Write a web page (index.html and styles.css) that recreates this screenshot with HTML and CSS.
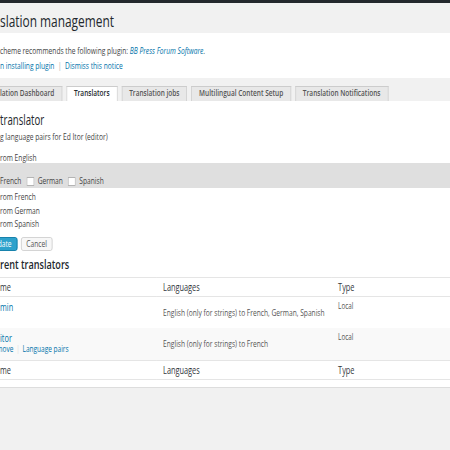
FILE: index.html
```html
<!DOCTYPE html>
<html lang="en">
<head>
    <meta charset="UTF-8">
    <meta name="viewport" content="width=device-width, initial-scale=1.0">
    <title>Translation management</title>
    <link rel="stylesheet" href="styles.css">
</head>
<body>
    <div class="adminbar"></div>

    <div class="page">
        <div class="page-head">
            <h1>slation management</h1>
        </div>

        <!-- Notice -->
        <div class="notice">
            <p>cheme recommends the following plugin: <em><a href="#">BB Press Forum Software</a></em>.</p>
            <p><a href="#">n installing plugin</a><span class="sep">|</span><a href="#">Dismiss this notice</a></p>
        </div>

        <!-- Tabs -->
        <div class="tabs">
            <a href="#" class="tab first">lation Dashboard</a>
            <a href="#" class="tab active">Translators</a>
            <a href="#" class="tab">Translation jobs</a>
            <a href="#" class="tab">Multilingual Content Setup</a>
            <a href="#" class="tab">Translation Notifications</a>
        </div>

        <div class="panel">
            <h2 class="edit-title">translator</h2>
            <p class="lead">g language pairs for Ed Itor (editor)</p>

            <p class="from-en">rom English</p>
            <div class="band">
                <label>French</label>
                <label><span class="cb"></span>German</label>
                <label><span class="cb"></span>Spanish</label>
            </div>

            <div class="pairs">
                <p>rom French</p>
                <p>rom German</p>
                <p>rom Spanish</p>
            </div>

            <div class="actions">
                <button class="primary">Update</button>
                <button>Cancel</button>
            </div>

            <h2 class="list-title">rent translators</h2>

            <table class="translators">
                <colgroup>
                    <col class="col-name">
                    <col class="col-langs">
                    <col>
                </colgroup>
                <thead>
                    <tr><th>me</th><th>Languages</th><th>Type</th></tr>
                </thead>
                <tbody>
                    <tr>
                        <td><a href="#" class="name">min</a></td>
                        <td class="langs">English (only for strings) to French, German, Spanish</td>
                        <td class="type">Local</td>
                    </tr>
                    <tr class="alt">
                        <td>
                            <a href="#" class="name">itor</a>
                            <div class="row-actions"><a href="#">move</a><span class="sep">|</span><a href="#">Language pairs</a></div>
                        </td>
                        <td class="langs">English (only for strings) to French</td>
                        <td class="type">Local</td>
                    </tr>
                </tbody>
                <tfoot>
                    <tr><th>me</th><th>Languages</th><th>Type</th></tr>
                </tfoot>
            </table>
        </div>
    </div>
</body>
</html>
```

FILE: styles.css
```css
html, body {
    margin: 0;
    padding: 0;
    overflow: hidden;
}

body {
    font-family: "Open Sans", sans-serif;
    font-size: 9.5px;
    color: #444;
    background-color: #f1f1f1;
}

a {
    color: #0073aa;
    text-decoration: none;
}

.adminbar {
    height: 3px;
    background-color: #23282d;
}

/* the whole screen is squeezed sideways */
.page {
    width: 643px;
    transform: scaleX(0.7);
    transform-origin: 0 0;
}

/* Header */
.page-head {
    height: 30px;
    box-sizing: border-box;
    padding-top: 8px;
}

.page-head h1 {
    margin: 0;
    font-size: 17px;
    font-weight: 400;
    line-height: 20px;
    color: #23282d;
}

/* Notice */
.notice {
    height: 45px;
    box-sizing: border-box;
    padding-top: 9.5px;
    background-color: #fff;
}

.notice p {
    margin: 0;
    line-height: 15px;
}

.sep {
    color: #aaa;
    margin: 0 5px;
}

/* Tabs */
.tabs {
    display: flex;
    align-items: flex-end;
    gap: 6px;
    height: 23px;
    box-sizing: border-box;
    padding-top: 8px;
}

.tab {
    height: 15px;
    box-sizing: border-box;
    padding: 0 10px;
    border: 1px solid #ccc;
    border-bottom: none;
    background-color: #e8e8e8;
    color: #555;
    font-size: 9.3px;
    font-weight: 600;
    line-height: 12px;
    white-space: nowrap;
}

.tab.first {
    padding-left: 0;
    border-left: none;
}

.tab.active {
    background-color: #fff;
    color: #23282d;
}

/* Panel */
.panel {
    background-color: #fff;
    padding: 11px 0 7px;
    border-bottom: 1px solid #ddd;
}

.panel h2 {
    margin: 0;
    font-size: 13px;
    font-weight: 600;
    line-height: 16px;
    color: #23282d;
}

.panel h2.edit-title {
    font-size: 13.8px;
    font-weight: 400;
}

.lead {
    margin: 2px 0 0;
    line-height: 14px;
}

.from-en {
    margin: 9px 0 0;
    line-height: 10px;
}

.band {
    background-color: #dfdfdf;
    padding: 11px 0 0;
    line-height: 14px;
}

.cb {
    display: inline-block;
    width: 11px;
    height: 9px;
    box-sizing: border-box;
    border: 1px solid #b4b4b4;
    background-color: #fff;
    vertical-align: middle;
    margin: 0 5px;
}

.pairs {
    margin-top: 2px;
}

.pairs p {
    margin: 0;
    line-height: 13.5px;
}

.actions {
    display: flex;
    gap: 5px;
    margin-top: 6px;
}

button {
    font-family: inherit;
    font-size: 9.5px;
    height: 14px;
    line-height: 12px;
    padding: 0 7px;
    border: 1px solid #ccc;
    border-radius: 3px;
    background-color: #f7f7f7;
    color: #555;
}

button.primary {
    margin-left: -24px;
    background-color: #2ea2cc;
    border-color: #0074a2;
    color: #fff;
}

.panel h2.list-title {
    margin-top: 5px;
}

/* Translators table */
.translators {
    margin-top: 5px;
    margin-left: -10px;
    width: 653px;
    table-layout: fixed;
    border-collapse: collapse;
    border-top: 1px solid #e5e5e5;
    border-bottom: 1px solid #e5e5e5;
}

.col-name {
    width: 233px;
}

.col-langs {
    width: 250px;
}

.translators th {
    padding: 0 10px;
    height: 18px;
    line-height: 18px;
    text-align: left;
    font-size: 10.5px;
    font-weight: 400;
    color: #32373c;
}

.translators thead th {
    border-bottom: 1px solid #e5e5e5;
}

.translators tfoot th {
    border-top: 1px solid #e5e5e5;
}

.translators tbody tr {
    height: 32px;
}

.translators tbody tr.alt {
    background-color: #f9f9f9;
}

.translators td {
    padding: 3px 10px 0;
    vertical-align: top;
    color: #555;
}

.translators .name {
    font-size: 10.5px;
    line-height: 14px;
}

.translators td.langs {
    vertical-align: middle;
    padding-top: 0;
    white-space: nowrap;
}

.translators td.type {
    font-size: 9px;
    line-height: 12px;
}

.row-actions {
    margin-left: -5px;
    font-size: 9.3px;
    line-height: 8px;
}

.row-actions .sep {
    color: #ddd;
    margin: 0 4px;
}
```
